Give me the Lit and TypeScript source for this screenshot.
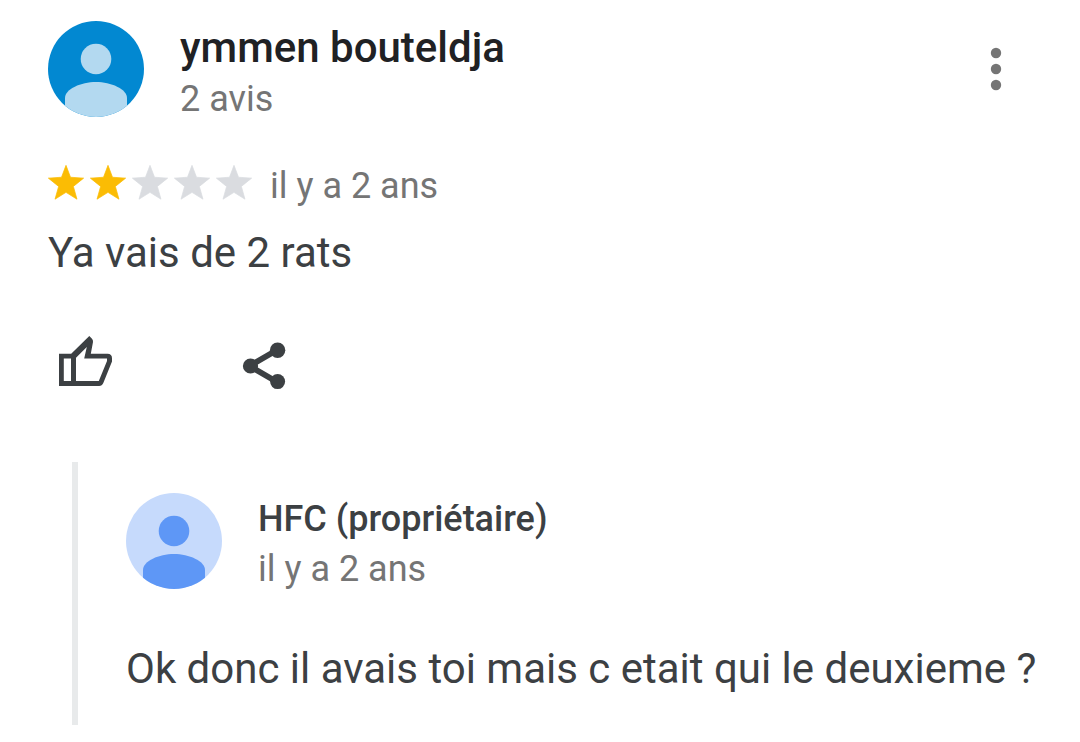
import { LitElement, html, css } from "lit";
import { customElement, property } from "lit/decorators.js";

@customElement("user-avatar")
class UserAvatar extends LitElement {
  @property() tone = "sky";

  static styles = css`
    :host { display: block; flex: none; width: 96px; height: 96px; }
    svg { display: block; width: 100%; height: 100%; border-radius: 50%; }
    .sky { background: #0288d1; color: #b3d9f0; }
    .pale { background: #c6dafc; color: #5e97f6; }
  `;

  render() {
    return html`<svg class=${this.tone} viewBox="0 0 96 96" fill="currentColor" aria-hidden="true">
      <circle cx="48" cy="38" r="15.3" />
      <path d="M17 96V77C17 68 33 61 48 61s31 7 31 16v19z" />
    </svg>`;
  }
}

@customElement("star-rating")
class StarRating extends LitElement {
  @property({ type: Number }) value = 0;

  static styles = css`
    :host { display: flex; gap: 6px; }
    svg {
      display: block;
      width: 36px;
      height: 42px;
      overflow: visible;
      color: #dadce0;
      fill: currentColor;
      stroke: currentColor;
      stroke-width: 0.4;
      stroke-linejoin: round;
    }
    .on { color: #fbbc04; }
  `;

  render() {
    return [1, 2, 3, 4, 5].map(
      (n) => html`<svg class=${n <= this.value ? "on" : ""} viewBox="2 2 20 23.333" aria-hidden="true">
        <path d="M12 17.200L18.100 21l-2-7.100L21.800 9.300l-7.300-.5L12 2.200 9.500 8.800 2.200 9.300l5.700 4.600L5.900 21z" />
      </svg>`
    );
  }
}

@customElement("app-root")
class AppRoot extends LitElement {
  static styles = css`
    :host {
      display: block;
      box-sizing: border-box;
      padding: 21px 36px 16px 48px;
      font-family: Roboto, sans-serif;
      color: #3c4043;
      background: #fff;
    }
    * { box-sizing: border-box; }
    h2, h3, p { margin: 0; }
    h2, h3 { font-weight: 500; }
    header { display: flex; align-items: flex-start; gap: 36px; }
    .who { flex: 1; }
    h2 { font-size: 42px; line-height: 54px; color: #202124; }
    h3 { font-size: 36px; line-height: 52px; }
    .meta { font-size: 36px; line-height: 48px; color: #757575; }
    button {
      display: block;
      padding: 0;
      border: 0;
      background: none;
      color: inherit;
      cursor: pointer;
    }
    button svg { display: block; fill: currentColor; }
    .more { color: #757575; }
    .rating { display: flex; align-items: center; gap: 18px; margin-top: 39px; }
    .body { font-size: 42px; line-height: 64px; }
    .rating + .body { margin-top: 11px; }
    .actions { display: flex; gap: 108px; margin-top: 45px; }
    .reply {
      margin: 60px -12px 0 24px;
      padding: 31px 0 24px 48px;
      border-left: 6px solid #e8eaeb;
    }
    .reply .body { margin-top: 44px; }
  `;

  render() {
    return html`
      <article>
        <header>
          <user-avatar tone="sky"></user-avatar>
          <div class="who">
            <h2>ymmen bouteldja</h2>
            <p class="meta">2 avis</p>
          </div>
          <button class="more" aria-label="Plus d'options">
            <svg width="96" height="96" viewBox="0 0 96 96">
              <circle cx="48" cy="32" r="5.200" /><circle cx="48" cy="48" r="5.200" /><circle cx="48" cy="64" r="5.200" />
            </svg>
          </button>
        </header>
        <div class="rating">
          <star-rating value="2" role="img" aria-label="2 étoiles sur 5"></star-rating>
          <p class="meta">il y a 2 ans</p>
        </div>
        <p class="body">Ya vais de 2 rats</p>
        <div class="actions">
          <button aria-label="J'aime">
            <svg width="72" height="72" viewBox="0 0 72 72">
              <path fill-rule="evenodd" d="M11 23.700H23.200L41.300 6L44 8.700Q45.200 10 45 12L42.800 23.700H59.500Q64 23.700 64 28.200V31.500L55.300 53Q54 56 51.200 56H11ZM15.800 28.400V51H23V28.400ZM28 27.800V51H50.800L59 31V28.400H36.200L38.800 17Z" />
            </svg>
          </button>
          <button aria-label="Partager">
            <svg width="72" height="72" viewBox="0 0 72 72">
              <path d="M21 36.200 49.500 19.700M21 35.800 49.500 52.300" fill="none" stroke="currentColor" stroke-width="5.800" />
              <circle cx="22.500" cy="36" r="7.600" /><circle cx="49.600" cy="20.200" r="7.700" /><circle cx="49.600" cy="51.600" r="7.500" />
            </svg>
          </button>
        </div>
        <section class="reply">
          <header>
            <user-avatar tone="pale"></user-avatar>
            <div class="who">
              <h3>HFC (propriétaire)</h3>
              <p class="meta">il y a 2 ans</p>
            </div>
          </header>
          <p class="body">Ok donc il avais toi mais c etait qui le deuxieme ?</p>
        </section>
      </article>
    `;
  }
}
